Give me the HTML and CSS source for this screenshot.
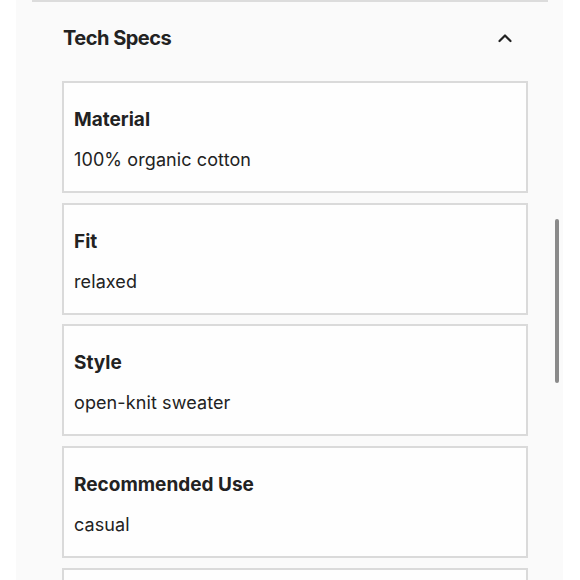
FILE: index.html
```html
<!DOCTYPE html>
<html lang="en">
<head>
<meta charset="utf-8">
<title>Tech Specs</title>
<link rel="stylesheet" href="styles.css">
</head>
<body>
<div class="panel">
  <div class="rule"></div>
  <section class="specs">
    <div class="specs-header">
      <h2 class="specs-title">Tech Specs</h2>
      <svg class="chevron" width="14" height="10" viewBox="0 0 14 10" aria-hidden="true">
        <path d="M1.5 8 L7 2.5 L12.5 8" fill="none" stroke="#222" stroke-width="2.2" stroke-linecap="round" stroke-linejoin="round"/>
      </svg>
    </div>
    <div class="spec-list">
      <div class="spec-card">
        <div class="spec-label">Material</div>
        <div class="spec-value">100% organic cotton</div>
      </div>
      <div class="spec-card">
        <div class="spec-label">Fit</div>
        <div class="spec-value">relaxed</div>
      </div>
      <div class="spec-card">
        <div class="spec-label">Style</div>
        <div class="spec-value">open-knit sweater</div>
      </div>
      <div class="spec-card">
        <div class="spec-label">Recommended Use</div>
        <div class="spec-value">casual</div>
      </div>
      <div class="spec-card"></div>
    </div>
  </section>
  <div class="scrollbar"></div>
</div>
</body>
</html>
```

FILE: styles.css
```css
html, body {
  margin: 0;
  padding: 0;
  background: #ffffff;
}
body {
  height: 580px;
  overflow: hidden;
  font-family: Inter, "Noto Sans", "Liberation Sans", sans-serif;
  color: #222222;
}
.panel {
  position: relative;
  margin-left: 16px;
  width: 547px;
  height: 580px;
  background: #fafafa;
  overflow: hidden;
}
.rule {
  height: 2px;
  margin: 0 15px 0 16px;
  background: #dcdcdc;
}
.specs-header {
  display: flex;
  align-items: center;
  justify-content: space-between;
  padding: 24px 51px 0 47px;
  height: 24px;
}
.specs-title {
  margin: 0;
  font-size: 20px;
  line-height: 24px;
  font-weight: 700;
  letter-spacing: -0.5px;
  color: #222222;
}
.chevron {
  display: block;
}
.spec-list {
  display: flex;
  flex-direction: column;
  gap: 9.7px;
  margin: 31px 0 0 46px;
  width: 466px;
}
.spec-card {
  box-sizing: border-box;
  height: 112px;
  flex: none;
  border: 2px solid #dadada;
  background: #fefefe;
  padding: 24px 10px 0 10px;
}
.spec-label {
  font-size: 19px;
  line-height: 26px;
  font-weight: 700;
  color: #222222;
}
.spec-value {
  margin-top: 14px;
  font-size: 18px;
  line-height: 26px;
  font-weight: 400;
  letter-spacing: 0.1px;
  color: #222222;
}
.scrollbar {
  position: absolute;
  left: 539px;
  top: 219px;
  width: 4px;
  height: 164px;
  border-radius: 2px;
  background: #8a8a8a;
}
```
